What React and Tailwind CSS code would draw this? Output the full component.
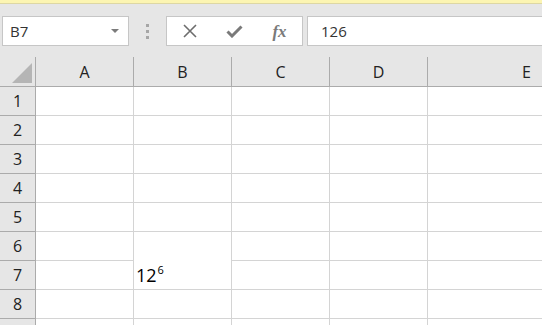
import React from "react";

const COLS = [
  { label: "A", w: "w-[98px]" },
  { label: "B", w: "w-[98px]" },
  { label: "C", w: "w-[98px]" },
  { label: "D", w: "w-[98px]" },
  { label: "E", w: "w-[200px]" },
];
const ROWS = [1, 2, 3, 4, 5, 6, 7, 8, 9];

function Cell({ col, row }) {
  // B6/B7 are covered by the cell editor, so no line between them
  const noBottom = col === "B" && row === 6;
  return (
    <div
      className={`${COLS.find((c) => c.label === col).w} h-[29px] shrink-0 border-r border-[#d4d4d4] ${
        noBottom ? "" : "border-b"
      } border-b-[#d4d4d4] relative`}
    >
      {col === "B" && row === 7 && (
        <span className="absolute left-[2px] top-[3px] text-[18px] leading-[22px] text-black">
          12<sup className="text-[11px] -top-[8px] ml-[1px]">6</sup>
        </span>
      )}
    </div>
  );
}

export default function App() {
  return (
    <div
      className="w-[542px] h-[325px] overflow-hidden bg-white"
      style={{ fontFamily: '"Open Sans", "Noto Sans", sans-serif' }}
    >
      <div className="h-[4px] bg-[#fcf5b2] border-b border-[#ddd7a4]" />

      {/* formula bar */}
      <div className="h-[53px] bg-[#e6e6e6] flex items-start pt-[12px]">
        <div className="ml-[2px] w-[127px] h-[30px] bg-white border border-[#c6c6c6] flex items-center justify-between pl-[7px] pr-[9px]">
          <span className="text-[15px] text-[#333]">B7</span>
          <svg width="8" height="5" viewBox="0 0 8 5">
            <path d="M0 0 L8 0 L4 4 Z" fill="#7b7b7b" />
          </svg>
        </div>
        <div className="w-[37px] h-[30px] flex flex-col items-center justify-center gap-[3px]">
          <span className="w-[3px] h-[3px] bg-[#a6a6a6]" />
          <span className="w-[3px] h-[3px] bg-[#a6a6a6]" />
          <span className="w-[3px] h-[3px] bg-[#a6a6a6]" />
        </div>
        <div className="w-[137px] h-[30px] bg-white border border-[#c6c6c6] flex items-center">
          <div className="w-[45px] flex justify-center">
            <svg width="14" height="14" viewBox="0 0 14 14">
              <path d="M1 1 L13 13 M13 1 L1 13" stroke="#6d6d6d" strokeWidth="1.6" />
            </svg>
          </div>
          <div className="w-[45px] flex justify-center">
            <svg width="17" height="13" viewBox="0 0 17 13">
              <path d="M1.5 6.5 L6 11 L15.5 1.5" stroke="#7a7a7a" strokeWidth="3" fill="none" />
            </svg>
          </div>
          <div className="w-[45px] flex justify-center">
            <span
              className="italic font-bold text-[17px] text-[#7a7a7a] leading-none"
              style={{ fontFamily: '"Liberation Serif", serif' }}
            >
              fx
            </span>
          </div>
        </div>
        <div className="ml-[4px] flex-1 h-[30px] bg-white border border-[#c6c6c6] border-r-0 flex items-center pl-[13px]">
          <span className="text-[15px] text-[#333]">126</span>
        </div>
      </div>

      {/* column headers */}
      <div className="flex h-[30px] bg-[#e6e6e6] border-b border-[#ababab]">
        <div className="w-[36px] shrink-0 border-r border-[#ababab] relative">
          <svg className="absolute right-[3px] bottom-[3px]" width="20" height="20" viewBox="0 0 20 20">
            <path d="M20 0 L20 20 L0 20 Z" fill="#b5b5b5" />
          </svg>
        </div>
        {COLS.map((c) => (
          <div
            key={c.label}
            className={`${c.w} shrink-0 border-r border-[#ababab] flex items-end justify-center pb-[2px] text-[16px] text-[#222]`}
          >
            <span className={c.label === "E" ? "relative left-[-1px]" : ""}>{c.label}</span>
          </div>
        ))}
      </div>

      {/* rows (row 9 is only a sliver at the bottom edge) */}
      {ROWS.map((r) => (
        <div key={r} className="flex">
          <div className="w-[36px] h-[29px] shrink-0 bg-[#e6e6e6] border-r border-b border-[#ababab] flex items-center justify-center text-[16px] text-[#222]">
            {r < 9 ? r : ""}
          </div>
          {COLS.map((c) => (
            <Cell key={c.label} col={c.label} row={r} />
          ))}
        </div>
      ))}
    </div>
  );
}
